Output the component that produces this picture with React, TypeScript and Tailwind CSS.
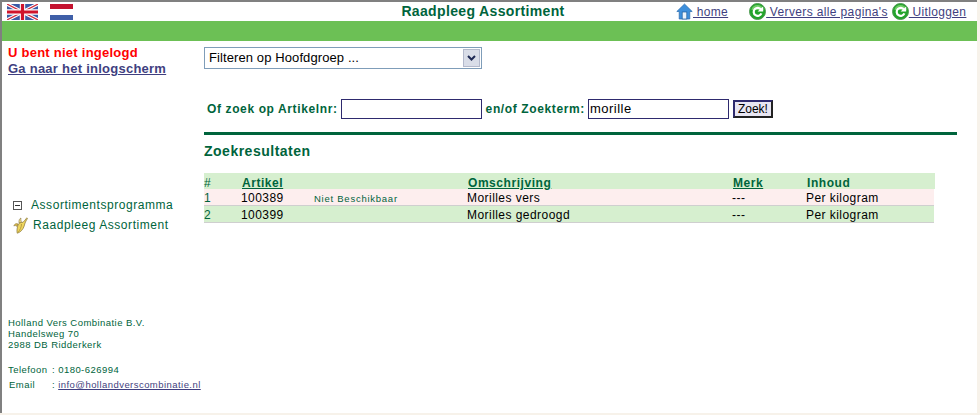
import React from "react";

const font = "font-['Liberation_Sans',Arial,sans-serif]";
const green = "text-[#00643c]";
const link = "text-[#3f3f80] underline";

function Refresh() {
  return (
    <svg width="17" height="17" viewBox="0 0 17 17" className="shrink-0">
      <circle cx="8.5" cy="8.5" r="8" fill="#22a32a" stroke="#4f9a52" />
      <path d="M2.5 7a6 5 0 0 1 12 0z" fill="#8fe07f" opacity="0.7" />
      <path d="M12 6.6A4 4 0 1 0 12.4 10.4" fill="none" stroke="#fff" strokeWidth="2.2" />
      <path d="M8.6 8.4h5.6V3.6z" fill="#fff" />
    </svg>
  );
}

function Home() {
  return (
    <svg width="17" height="17" viewBox="0 0 17 17" className="shrink-0">
      <path d="M8.5 1 0.8 8.5h2.4V16h10.6V8.5h2.4z" fill="#3d8fdc" stroke="#2a6cae" strokeWidth="0.7" />
      <rect x="6.2" y="9" width="4.6" height="7" fill="#eaf3fb" stroke="#1f5f9f" strokeWidth="0.7" />
    </svg>
  );
}

function FlagUK() {
  return (
    <svg width="31" height="16" viewBox="0 0 31 16" className="shrink-0">
      <rect width="31" height="16" fill="#3b5aa6" />
      <path d="M0 0 31 16M31 0 0 16" stroke="#fff" strokeWidth="3.4" />
      <path d="M0 0 31 16M31 0 0 16" stroke="#d22a3c" strokeWidth="1.2" />
      <path d="M15.5 0V16M0 8H31" stroke="#fff" strokeWidth="5.4" />
      <path d="M15.5 0V16M0 8H31" stroke="#d0142c" strokeWidth="3.2" />
    </svg>
  );
}

function FlagNL() {
  return (
    <div className="w-[23px] h-[16px] flex flex-col shrink-0">
      <div className="h-[5px] bg-[#c4122f]" />
      <div className="h-[6px] bg-white" />
      <div className="h-[5px] bg-[#3f5fa8]" />
    </div>
  );
}

function Banana() {
  return (
    <svg width="15" height="17" viewBox="0 0 15 17" className="shrink-0">
      <path d="M5 7C3 6 1.500 7 .8 9 2 8.300 3 8.500 4 9.500z" fill="#d9b94a" stroke="#7d6a35" strokeWidth="0.5" />
      <path d="M6 6C5.500 3.500 6.500 1.500 8 1c-.3 1.500 0 3 .8 4.500z" fill="#e9d68a" stroke="#7d6a35" strokeWidth="0.5" />
      <path d="M13.800 .8c-1 1.700-2.600 3-3.800 4.500C8 5.200 5.500 6 5 8c-.8 2.500-1.400 5.500-.8 8.200 3-.6 6-3.800 7-7.200.6-2.800 1.800-5.400 3.300-7.500z" fill="#efd65e" stroke="#85723a" strokeWidth="0.7" />
      <path d="M8.500 7c0 3-1.500 6-3.300 8.200" fill="none" stroke="#b39a3e" strokeWidth="0.9" />
    </svg>
  );
}

const columns = "grid grid-cols-[37px_73px_153px_265px_74px_129px]";

function Row({ bg, n, art, status, desc }: { bg: string; n: string; art: string; status?: string; desc: string }) {
  return (
    <div className={`${columns} ${bg} h-[17px] border-b border-[#cfcfcf] items-end text-[12px] leading-[13px] tracking-[0.45px] text-black w-[730px]`}>
      <span className={green}>{n}</span>
      <span>{art}</span>
      <span className={`${green} text-[9.5px] tracking-[0.75px]`}>{status}</span>
      <span>{desc}</span>
      <span>---</span>
      <span>Per kilogram</span>
    </div>
  );
}

export default function App() {
  return (
    <div className={`${font} w-[980px] h-[415px] overflow-hidden bg-[#f7f2ea] pr-[3px] pb-[2px]`}>
      <div className="h-full bg-white border-t-2 border-l-2 border-[#808080] flex flex-col">
        <header className="h-[19px] flex items-center relative">
          <div className="flex items-start gap-[12px] pl-[5px] w-[346px]">
            <FlagUK />
            <FlagNL />
          </div>
          <div className={`w-[270px] text-center font-bold text-[14px] tracking-[0.35px] ${green}`}>Raadpleeg Assortiment</div>
          <nav className="flex items-center text-[12px] tracking-[0.36px] ml-[58px]">
            <Home />
            <a className={link}>&nbsp;home</a>
            <span className="ml-[21px]"><Refresh /></span>
            <a className={link}>&nbsp;Ververs alle pagina's</a>
            <span className="ml-[4px]"><Refresh /></span>
            <a className={link}>&nbsp;Uitloggen</a>
          </nav>
        </header>
        <div className="h-[20px] bg-[#6cc055]" />
        <div className="flex flex-1 min-h-0">
          <aside className="w-[202px] shrink-0 flex flex-col pl-[6px]">
            <div className="mt-[4px] text-[13px] leading-[16px] font-bold tracking-[0.25px]">
              <div className="text-[#ff0000]">U bent niet ingelogd</div>
              <a className={link}>Ga naar het inlogscherm</a>
            </div>
            <div className={`mt-[118px] pl-[6px] text-[12px] tracking-[0.55px] ${green}`}>
              <div className="flex items-center h-[20px]">
                <span className="w-[9px] h-[9px] border border-[#555] flex items-center justify-center mr-[9px] -ml-[1px]">
                  <span className="w-[5px] h-px bg-[#333]" />
                </span>
                <span>Assortimentsprogramma</span>
              </div>
              <div className="flex items-center h-[20px] -ml-[1px]">
                <Banana />
                <span className="ml-[5px]">Raadpleeg Assortiment</span>
              </div>
            </div>
            <div className={`mt-[82px] text-[9.5px] leading-[11px] tracking-[0.45px] ${green}`}>
              <div>Holland Vers Combinatie B.V.</div>
              <div>Handelsweg 70</div>
              <div>2988 DB Ridderkerk</div>
              <div className="mt-[14px] flex"><span className="w-[44px]">Telefoon</span><span>: 0180-626994</span></div>
              <div className="mt-[4px] flex pl-[1px]"><span className="w-[43px]">Email</span><span>:&nbsp;<a className={link}>info@hollandverscombinatie.nl</a></span></div>
            </div>
          </aside>
          <main className="flex-1 flex flex-col">
            <div className="mt-[6px] w-[278px] h-[22px] border border-[#7f9db9] bg-white flex items-center justify-between pl-[4px] pr-[1px] text-[13px] tracking-[0.1px] text-black">
              <span>Filteren op Hoofdgroep ...</span>
              <span className="w-[17px] h-[18px] bg-[#d9dde8] border border-[#b3b9cc] flex items-center justify-center">
                <svg width="9" height="6" viewBox="0 0 9 6"><path d="M1 1l3.500 3.500L8 1" fill="none" stroke="#1f2a55" strokeWidth="2" /></svg>
              </span>
            </div>
            <div className={`mt-[29px] flex items-center h-[21px] pl-[3px] font-bold text-[12px] tracking-[0.62px] ${green}`}>
              <span>Of zoek op Artikelnr:</span>
              <div className="ml-[3px] w-[141px] h-[20px] border border-[#2e2a6e] bg-white" />
              <span className="ml-[4px]">en/of Zoekterm:</span>
              <div className="ml-[3px] w-[141px] h-[20px] border border-[#2e2a6e] bg-white text-black font-normal text-[13px] tracking-[0.5px] pl-[1px] leading-[18px]">morille</div>
              <div className="ml-[4px] w-[40px] h-[18px] border-2 border-t-[#2e2a6e] border-l-[#2e2a6e] border-r-[#222] border-b-[#222] bg-[#e8e6f2] text-black font-normal text-[12px] tracking-[0px] text-center leading-[14px]">Zoek!</div>
            </div>
            <div className="mt-[13px] w-[753px] h-[3px] bg-[#00643c]" />
            <h2 className={`mt-[8px] text-[14px] leading-[17px] font-bold tracking-[0.5px] ${green}`}>Zoekresultaten</h2>
            <div className="mt-[13px] w-[731px]">
              <div className={`${columns} h-[16px] pt-[1px] bg-[#d6efcf] items-center font-bold text-[12px] tracking-[0.55px] ${green}`}>
                <span className="font-normal">#</span>
                <span className="underline pl-[1px]">Artikel</span>
                <span />
                <span className="underline pl-[1px]">Omschrijving</span>
                <span className="underline pl-[1px]">Merk</span>
                <span className="pl-[1px]">Inhoud</span>
              </div>
              <Row bg="bg-[#fdeeee]" n="1" art="100389" status="Niet Beschikbaar" desc="Morilles vers" />
              <Row bg="bg-[#d6efcf]" n="2" art="100399" desc="Morilles gedroogd" />
            </div>
          </main>
        </div>
      </div>
    </div>
  );
}
